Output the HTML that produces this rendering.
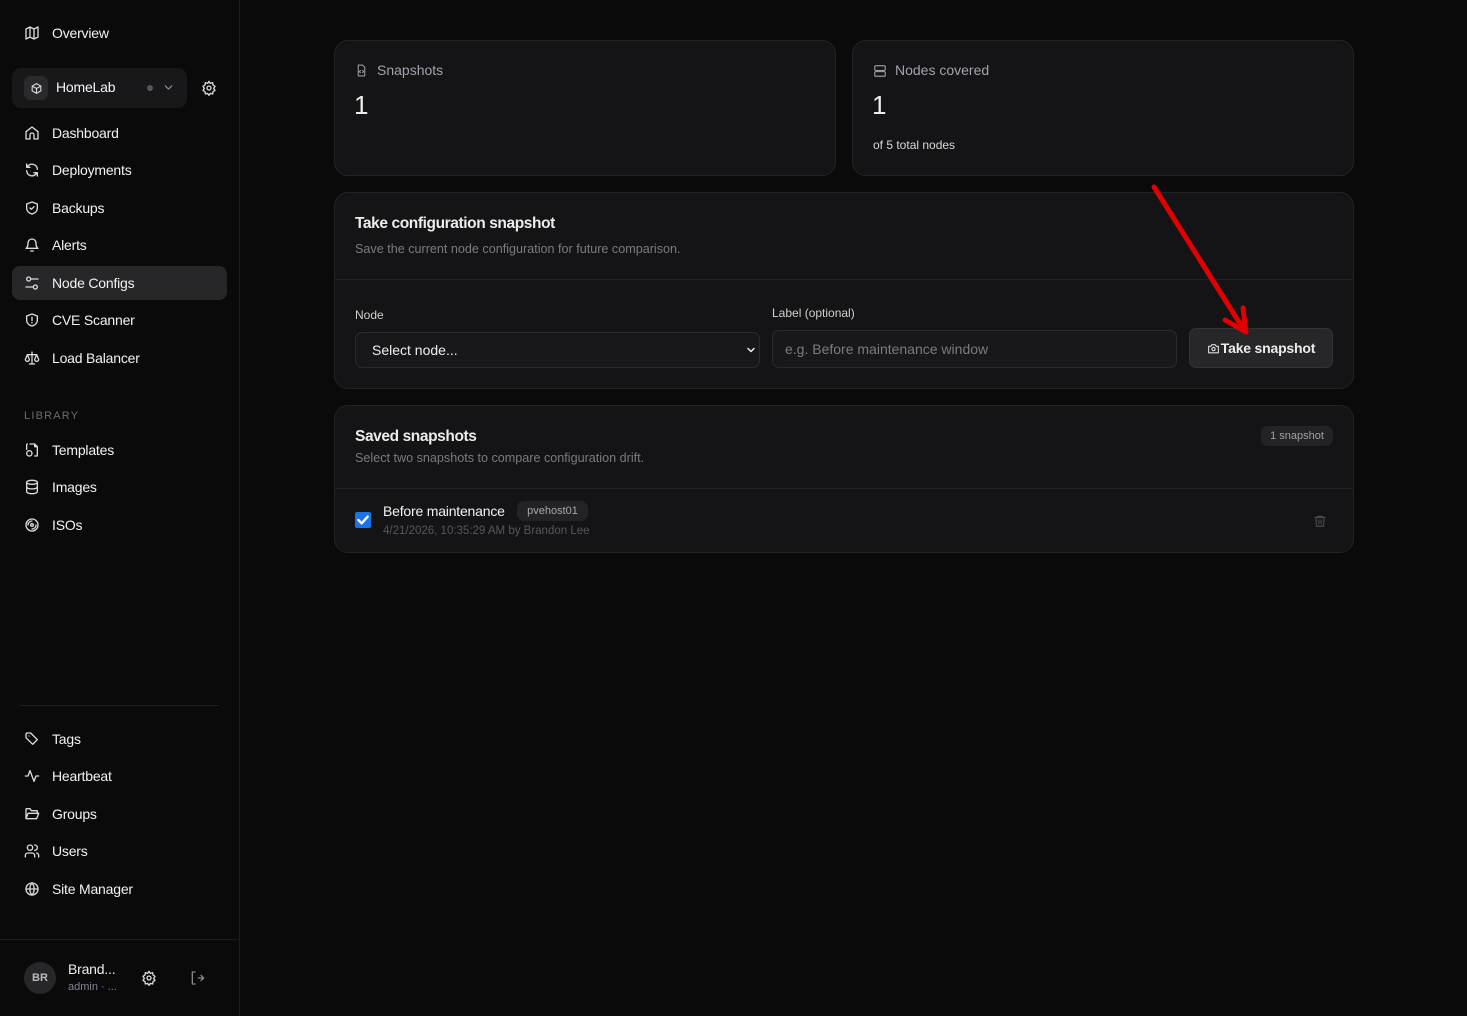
<!DOCTYPE html>
<html><head><meta charset="utf-8">
<style>
*{box-sizing:border-box;margin:0;padding:0}
html,body{width:1467px;height:1016px;background:#0a0a0b;overflow:hidden;font-family:"Liberation Sans",sans-serif;color:#ececec}
.abs{position:absolute}
.sb{position:absolute;left:0;top:0;width:240px;height:1016px;background:#0a0a0b;border-right:1px solid #1c1c1f}
.nav{position:absolute;left:12px;width:215px;height:34px;display:flex;align-items:center;padding-left:12px;font-size:14px;color:#f2f2f2;border-radius:8px;letter-spacing:-0.2px}
.nav svg{width:16px;height:16px;margin-right:12px;flex:none}
.nav.act{background:#27272a}
svg{fill:none;stroke:#dcdcdc;stroke-width:2;stroke-linecap:round;stroke-linejoin:round}
.card{position:absolute;background:#141416;border:1px solid #232326;border-radius:14px}
.muted{color:#7a7a80}
</style></head><body>
<div class="sb">
  <div class="nav" style="top:16px"><svg viewBox="0 0 24 24"><path d="M3 6l6-3 6 3 6-3v15l-6 3-6-3-6 3z M9 3v15 M15 6v15"/></svg>Overview</div>
  <div class="abs" style="left:12px;top:68px;width:175px;height:40px;background:#18181b;border-radius:9px"></div>
  <div class="abs" style="left:24px;top:76px;width:24px;height:24px;background:#2a2a2e;border-radius:6px;display:flex;align-items:center;justify-content:center"><svg viewBox="0 0 24 24" style="width:13px;height:13px"><path d="M12 3l8 4.5v9L12 21l-8-4.5v-9z M4 7.5l8 4.5 8-4.5 M12 12v9"/></svg></div>
  <div class="abs" style="left:56px;top:79px;font-size:14px;letter-spacing:-0.2px;color:#f4f4f4">HomeLab</div>
  <div class="abs" style="left:147px;top:85px;width:6px;height:6px;border-radius:3px;background:#55555c"></div>
  <svg class="abs" viewBox="0 0 24 24" style="left:162px;top:81px;width:13px;height:13px;stroke:#999"><path d="M6 9l6 6 6-6"/></svg>
  <svg class="abs" viewBox="0 0 24 24" style="left:201px;top:80px;width:16px;height:16px"><circle cx="12" cy="12" r="3"/><path d="M12 2l2 3 3.5-1 .5 3.5 3 2-2 3 2 3-3 2-.5 3.5-3.5-1-2 3-2-3-3.5 1-.5-3.5-3-2 2-3-2-3 3-2 .5-3.5 3.5 1z"/></svg>
  <div class="nav" style="top:116px"><svg viewBox="0 0 24 24"><path d="M3 10l9-7 9 7v11H15v-6a3 3 0 0 0-6 0v6H3z"/></svg>Dashboard</div>
  <div class="nav" style="top:153px"><svg viewBox="0 0 24 24"><path d="M20 11a8 8 0 0 0-14-5l-2 2 M4 3v5h5 M4 13a8 8 0 0 0 14 5l2-2 M20 21v-5h-5"/></svg>Deployments</div>
  <div class="nav" style="top:191px"><svg viewBox="0 0 24 24"><path d="M12 3l8 3v6c0 5-4 8-8 9-4-1-8-4-8-9V6z M9 12l2 2 4-4"/></svg>Backups</div>
  <div class="nav" style="top:228px"><svg viewBox="0 0 24 24"><path d="M6 9a6 6 0 0 1 12 0c0 7 3 8 3 8H3s3-1 3-8 M10 21h4"/></svg>Alerts</div>
  <div class="nav act" style="top:266px"><svg viewBox="0 0 24 24"><circle cx="7" cy="6" r="3"/><circle cx="17" cy="18" r="3"/><path d="M10 6h11 M3 18h11"/></svg>Node Configs</div>
  <div class="nav" style="top:303px"><svg viewBox="0 0 24 24"><path d="M12 3l8 3v6c0 5-4 8-8 9-4-1-8-4-8-9V6z M12 8v5 M12 16v.5"/></svg>CVE Scanner</div>
  <div class="nav" style="top:341px"><svg viewBox="0 0 24 24"><path d="M12 3v18 M5 7h14 M8 21h8 M5 7l-3 7a3 3 0 0 0 6 0z M19 7l-3 7a3 3 0 0 0 6 0z"/></svg>Load Balancer</div>
  <div class="abs" style="left:24px;top:410px;font-size:11px;letter-spacing:1.2px;color:#6b6b72">LIBRARY</div>
  <div class="nav" style="top:433px"><svg viewBox="0 0 24 24"><path d="M9 3h7l4 4v13a1 1 0 0 1-1 1h-3 M16 3v4h4 M4 11V4a1 1 0 0 1 1-1"/><circle cx="8" cy="17" r="4"/></svg>Templates</div>
  <div class="nav" style="top:470px"><svg viewBox="0 0 24 24"><ellipse cx="12" cy="5" rx="8" ry="3"/><path d="M4 5v14c0 1.7 3.6 3 8 3s8-1.3 8-3V5 M4 12c0 1.7 3.6 3 8 3s8-1.3 8-3"/></svg>Images</div>
  <div class="nav" style="top:508px"><svg viewBox="0 0 24 24"><circle cx="12" cy="12" r="9"/><circle cx="12" cy="12" r="2"/><path d="M6 12a6 6 0 0 1 6-6 M18 12a6 6 0 0 1-6 6"/></svg>ISOs</div>
  <div class="abs" style="left:20px;top:705px;width:199px;height:1px;background:#1f1f22"></div>
  <div class="nav" style="top:722px"><svg viewBox="0 0 24 24"><path d="M3 4v6l10 10 7-7L10 3H4z M7.5 7.5h.01"/></svg>Tags</div>
  <div class="nav" style="top:759px"><svg viewBox="0 0 24 24"><path d="M2 12h4l3-8 6 16 3-8h4"/></svg>Heartbeat</div>
  <div class="nav" style="top:797px"><svg viewBox="0 0 24 24"><path d="M3 19V5a1 1 0 0 1 1-1h5l2 3h8a1 1 0 0 1 1 1v2 M3 19l3-8h16l-3 8z"/></svg>Groups</div>
  <div class="nav" style="top:834px"><svg viewBox="0 0 24 24"><circle cx="9" cy="7" r="4"/><path d="M2 21v-2a4 4 0 0 1 4-4h6a4 4 0 0 1 4 4v2 M16 3a4 4 0 0 1 0 8 M22 21v-2a4 4 0 0 0-3-4"/></svg>Users</div>
  <div class="nav" style="top:872px"><svg viewBox="0 0 24 24"><circle cx="12" cy="12" r="9"/><path d="M3 12h18 M12 3a14 14 0 0 1 0 18 M12 3a14 14 0 0 0 0 18"/></svg>Site Manager</div>
  <div class="abs" style="left:0;top:939px;width:239px;height:1px;background:#1c1c1f"></div>
  <div class="abs" style="left:24px;top:962px;width:32px;height:32px;border-radius:16px;background:#27272a;color:#bbb;font-size:11px;font-weight:bold;display:flex;align-items:center;justify-content:center">BR</div>
  <div class="abs" style="left:68px;top:961px;font-size:14px;letter-spacing:-0.2px">Brand...</div>
  <div class="abs" style="left:68px;top:981px;font-size:11px;color:#7d8596">admin · ...</div>
  <svg class="abs" viewBox="0 0 24 24" style="left:141px;top:970px;width:16px;height:16px"><circle cx="12" cy="12" r="3"/><path d="M12 2l2 3 3.5-1 .5 3.5 3 2-2 3 2 3-3 2-.5 3.5-3.5-1-2 3-2-3-3.5 1-.5-3.5-3-2 2-3-2-3 3-2 .5-3.5 3.5 1z"/></svg>
  <svg class="abs" viewBox="0 0 24 24" style="left:189px;top:970px;width:16px;height:16px;stroke:#888"><path d="M9 3H5v18h4 M14 12h8 M18 8l4 4-4 4"/></svg>
</div>

<div class="card" style="left:334px;top:40px;width:502px;height:136px"></div>
<svg class="abs" viewBox="0 0 24 24" style="left:355px;top:64px;width:13px;height:13px;stroke:#999"><path d="M14 2H6v20h12V6z M10 12l-2 2 2 2 M14 12l2 2-2 2"/></svg>
<div class="abs" style="left:377px;top:62px;font-size:14px;color:#a0a4ad">Snapshots</div>
<div class="abs" style="left:354px;top:90px;font-size:26px">1</div>

<div class="card" style="left:852px;top:40px;width:502px;height:136px"></div>
<svg class="abs" viewBox="0 0 24 24" style="left:873px;top:64px;width:14px;height:14px;stroke:#999"><rect x="3" y="3" width="18" height="8" rx="2"/><rect x="3" y="13" width="18" height="8" rx="2"/></svg>
<div class="abs" style="left:895px;top:62px;font-size:14px;color:#a0a4ad">Nodes covered</div>
<div class="abs" style="left:872px;top:90px;font-size:26px">1</div>
<div class="abs" style="left:873px;top:138px;font-size:12px;color:#d8d8d8">of 5 total nodes</div>

<div class="card" style="left:334px;top:192px;width:1020px;height:197px"></div>
<div class="abs" style="left:335px;top:279px;width:1018px;height:1px;background:#222225"></div>
<div class="abs" style="left:355px;top:215px;font-size:15.5px;font-weight:bold;letter-spacing:-0.4px">Take configuration snapshot</div>
<div class="abs muted" style="left:355px;top:242px;font-size:12.6px">Save the current node configuration for future comparison.</div>
<div class="abs" style="left:355px;top:308px;font-size:12px;color:#cfcfcf">Node</div>
<div class="abs" style="left:355px;top:332px;width:405px;height:36px;background:#18181b;border:1px solid #2a2a2e;border-radius:7px;font-size:14px;padding:9px 16px;color:#eee">Select node...</div>
<svg class="abs" viewBox="0 0 24 24" style="left:745px;top:344px;width:12px;height:12px;stroke:#eee;stroke-width:3"><path d="M6 9l6 6 6-6"/></svg>
<div class="abs" style="left:772px;top:306px;font-size:12px;color:#cfcfcf">Label (optional)</div>
<div class="abs" style="left:772px;top:330px;width:405px;height:38px;background:#18181b;border:1px solid #2a2a2e;border-radius:7px;font-size:14px;padding:10px 12px;color:#7a7a80">e.g. Before maintenance window</div>
<div class="abs" style="left:1189px;top:328px;width:144px;height:40px;background:#27272a;border:1px solid #333337;border-radius:7px;font-size:14px;font-weight:bold;display:flex;align-items:center;justify-content:center;letter-spacing:-0.2px"><svg viewBox="0 0 24 24" style="width:13px;height:13px;margin-right:1px"><path d="M3 8h4l2-3h6l2 3h4v12H3z"/><circle cx="12" cy="13" r="3"/></svg>Take snapshot</div>

<div class="card" style="left:334px;top:405px;width:1020px;height:148px"></div>
<div class="abs" style="left:335px;top:488px;width:1018px;height:1px;background:#222225"></div>
<div class="abs" style="left:355px;top:428px;font-size:15.5px;font-weight:bold;letter-spacing:-0.4px">Saved snapshots</div>
<div class="abs muted" style="left:355px;top:451px;font-size:12.6px">Select two snapshots to compare configuration drift.</div>
<div class="abs" style="left:1261px;top:426px;width:72px;height:20px;background:#232326;border-radius:7px;font-size:11px;color:#a0a0a6;text-align:center;line-height:20px">1 snapshot</div>
<div class="abs" style="left:355px;top:512px;width:16px;height:16px;background:#1a73e8;border-radius:2px"><svg viewBox="0 0 24 24" style="width:16px;height:16px;stroke:#fff;stroke-width:3.5"><path d="M5 12l5 5 9-10"/></svg></div>
<div class="abs" style="left:383px;top:503px;font-size:14px;letter-spacing:-0.2px;color:#f2f2f2">Before maintenance</div>
<div class="abs" style="left:517px;top:501px;width:71px;height:20px;background:#232326;border-radius:7px;font-size:11px;color:#a6a6ac;text-align:center;line-height:20px">pvehost01</div>
<div class="abs" style="left:383px;top:525px;font-size:11.5px;color:#56565c">4/21/2026, 10:35:29 AM by Brandon Lee</div>
<svg class="abs" viewBox="0 0 24 24" style="left:1313px;top:514px;width:14px;height:14px;stroke:#4a4a50"><path d="M3 6h18 M8 6V4h8v2 M5 6l1 15h12l1-15 M10 10v7 M14 10v7"/></svg>

<svg class="abs" viewBox="0 0 1467 1016" style="left:0;top:0;width:1467px;height:1016px;pointer-events:none">
<path d="M1154 187 L1244 330 M1225 320 L1246 332 L1243 308" style="stroke:#e00000;stroke-width:5;fill:none"/>
</svg>
</body></html>
